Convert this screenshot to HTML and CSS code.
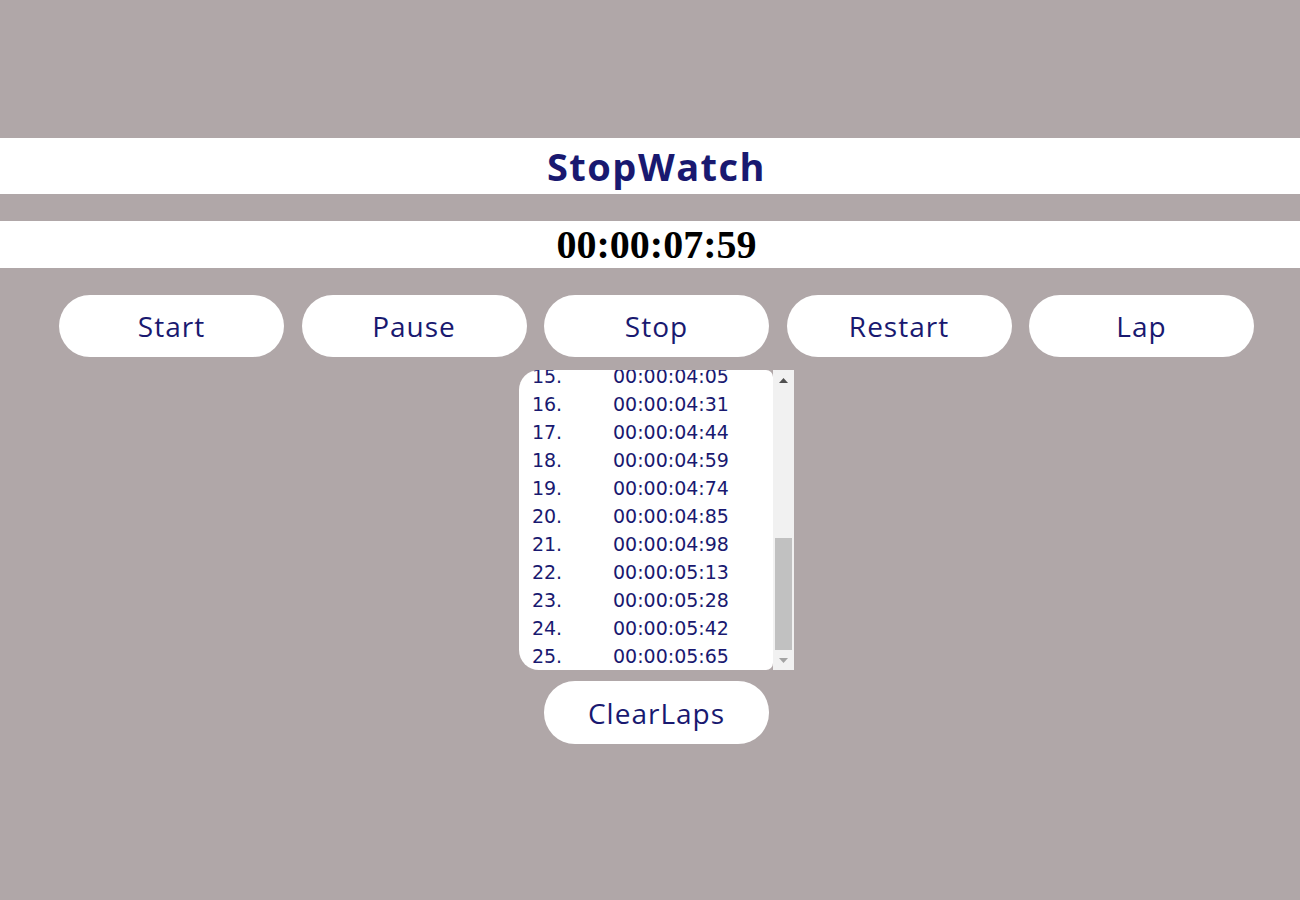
FILE: index.html
```html
<!DOCTYPE html>
<html>
<head>
    <title>StopWatch</title>
    <meta http-equiv="Content-Type" content="text/html; charset=utf-8" />
    <link rel="stylesheet" href="styles.css">
</head>
<body>
<div class="title-bar">StopWatch</div>

<div class="time-bar" id="time">00:00:07:59</div>

<div class="buttons">
    <div class="button">Start</div>
    <div class="button">Pause</div>
    <div class="button">Stop</div>
    <div class="button">Restart</div>
    <div class="button">Lap</div>
</div>

<div class="laps-wrap">
    <div class="laps" id="laps">
        <div class="lap"><span>1.</span><span>00:00:00:42</span></div>
        <div class="lap"><span>2.</span><span>00:00:00:71</span></div>
        <div class="lap"><span>3.</span><span>00:00:00:98</span></div>
        <div class="lap"><span>4.</span><span>00:00:01:24</span></div>
        <div class="lap"><span>5.</span><span>00:00:01:53</span></div>
        <div class="lap"><span>6.</span><span>00:00:01:80</span></div>
        <div class="lap"><span>7.</span><span>00:00:02:07</span></div>
        <div class="lap"><span>8.</span><span>00:00:02:33</span></div>
        <div class="lap"><span>9.</span><span>00:00:02:61</span></div>
        <div class="lap"><span>10.</span><span>00:00:02:88</span></div>
        <div class="lap"><span>11.</span><span>00:00:03:14</span></div>
        <div class="lap"><span>12.</span><span>00:00:03:39</span></div>
        <div class="lap"><span>13.</span><span>00:00:03:62</span></div>
        <div class="lap"><span>14.</span><span>00:00:03:86</span></div>
        <div class="lap"><span>15.</span><span>00:00:04:05</span></div>
        <div class="lap"><span>16.</span><span>00:00:04:31</span></div>
        <div class="lap"><span>17.</span><span>00:00:04:44</span></div>
        <div class="lap"><span>18.</span><span>00:00:04:59</span></div>
        <div class="lap"><span>19.</span><span>00:00:04:74</span></div>
        <div class="lap"><span>20.</span><span>00:00:04:85</span></div>
        <div class="lap"><span>21.</span><span>00:00:04:98</span></div>
        <div class="lap"><span>22.</span><span>00:00:05:13</span></div>
        <div class="lap"><span>23.</span><span>00:00:05:28</span></div>
        <div class="lap"><span>24.</span><span>00:00:05:42</span></div>
        <div class="lap"><span>25.</span><span>00:00:05:65</span></div>
    </div>
    <div class="scrollbar">
        <div class="scroll-arrow">
            <svg width="9" height="5" viewBox="0 0 9 5"><polygon points="0,5 4.5,0 9,5" fill="#505050"/></svg>
        </div>
        <div class="scroll-track"><div class="scroll-thumb"></div></div>
        <div class="scroll-arrow">
            <svg width="9" height="5" viewBox="0 0 9 5"><polygon points="0,0 4.5,5 9,0" fill="#a3a3a3"/></svg>
        </div>
    </div>
</div>

<div class="buttons">
    <div class="button">ClearLaps</div>
</div>

<script>
    // последний круг всегда виден
    var laps = document.getElementById('laps');
    laps.scrollTop = laps.scrollHeight;
</script>
</body>
</html>
```

FILE: styles.css
```css
html, body {margin: 0; height: 100%; overflow: hidden;}
body{
    background: #b0a7a8;
    color: #191970;
    font-family: "Comic Sans MS", "Open Sans", sans-serif;
}
.title-bar{
    margin-top: 138px;
    height: 56px;
    line-height: 56px;
    background: white;
    text-align: center;
    padding-left: 13px;
    font-size: 38px;
    font-weight: bold;
    letter-spacing: 1.5px;
}
.time-bar{
    margin-top: 27px;
    height: 47px;
    line-height: 47px;
    background: white;
    text-align: center;
    padding-left: 13px;
    color: black;
    font-family: "Liberation Serif", serif;
    font-size: 40px;
    font-weight: bold;
}
.buttons{
    display: flex;
    justify-content: center;
    gap: 17.5px;
    padding-left: 13px;
    margin-top: 27px;
}
.button{
    display: flex;
    align-items: center;
    justify-content: center;
    width: 225px;
    height: 62px;
    background: white;
    border-radius: 31px;
    font-size: 28px;
    letter-spacing: 1px;
    cursor: pointer;
}
.laps-wrap + .buttons{
    margin-top: 11px;
}
.laps-wrap + .buttons .button{
    height: 63px;
}

/* список кругов */
.laps-wrap{
    display: flex;
    width: 275px;
    height: 300px;
    margin: 13px auto 0;
    position: relative;
    left: 6.5px;
}
.laps{
    flex: 1;
    overflow-y: auto;
    scrollbar-width: none;
    background: white;
    border-radius: 20px 7px 7px 20px;
    font-family: "DejaVu Sans", sans-serif;
    font-size: 19px;
}
.laps::-webkit-scrollbar{
    display: none;
}
.lap{
    display: grid;
    grid-template-columns: 56px 1fr;
    padding-right: 6px;
    height: 28px;
    line-height: 28px;
    text-align: center;
}
.scrollbar{
    display: flex;
    flex-direction: column;
    width: 21px;
    background: #f1f1f1;
}
.scroll-arrow{
    display: flex;
    align-items: center;
    justify-content: center;
    height: 20px;
}
.scroll-track{
    flex: 1;
    display: flex;
    flex-direction: column;
    justify-content: flex-end;
    padding: 0 2px;
}
.scroll-thumb{
    height: 112px;
    background: #c1c1c1;
}
```
